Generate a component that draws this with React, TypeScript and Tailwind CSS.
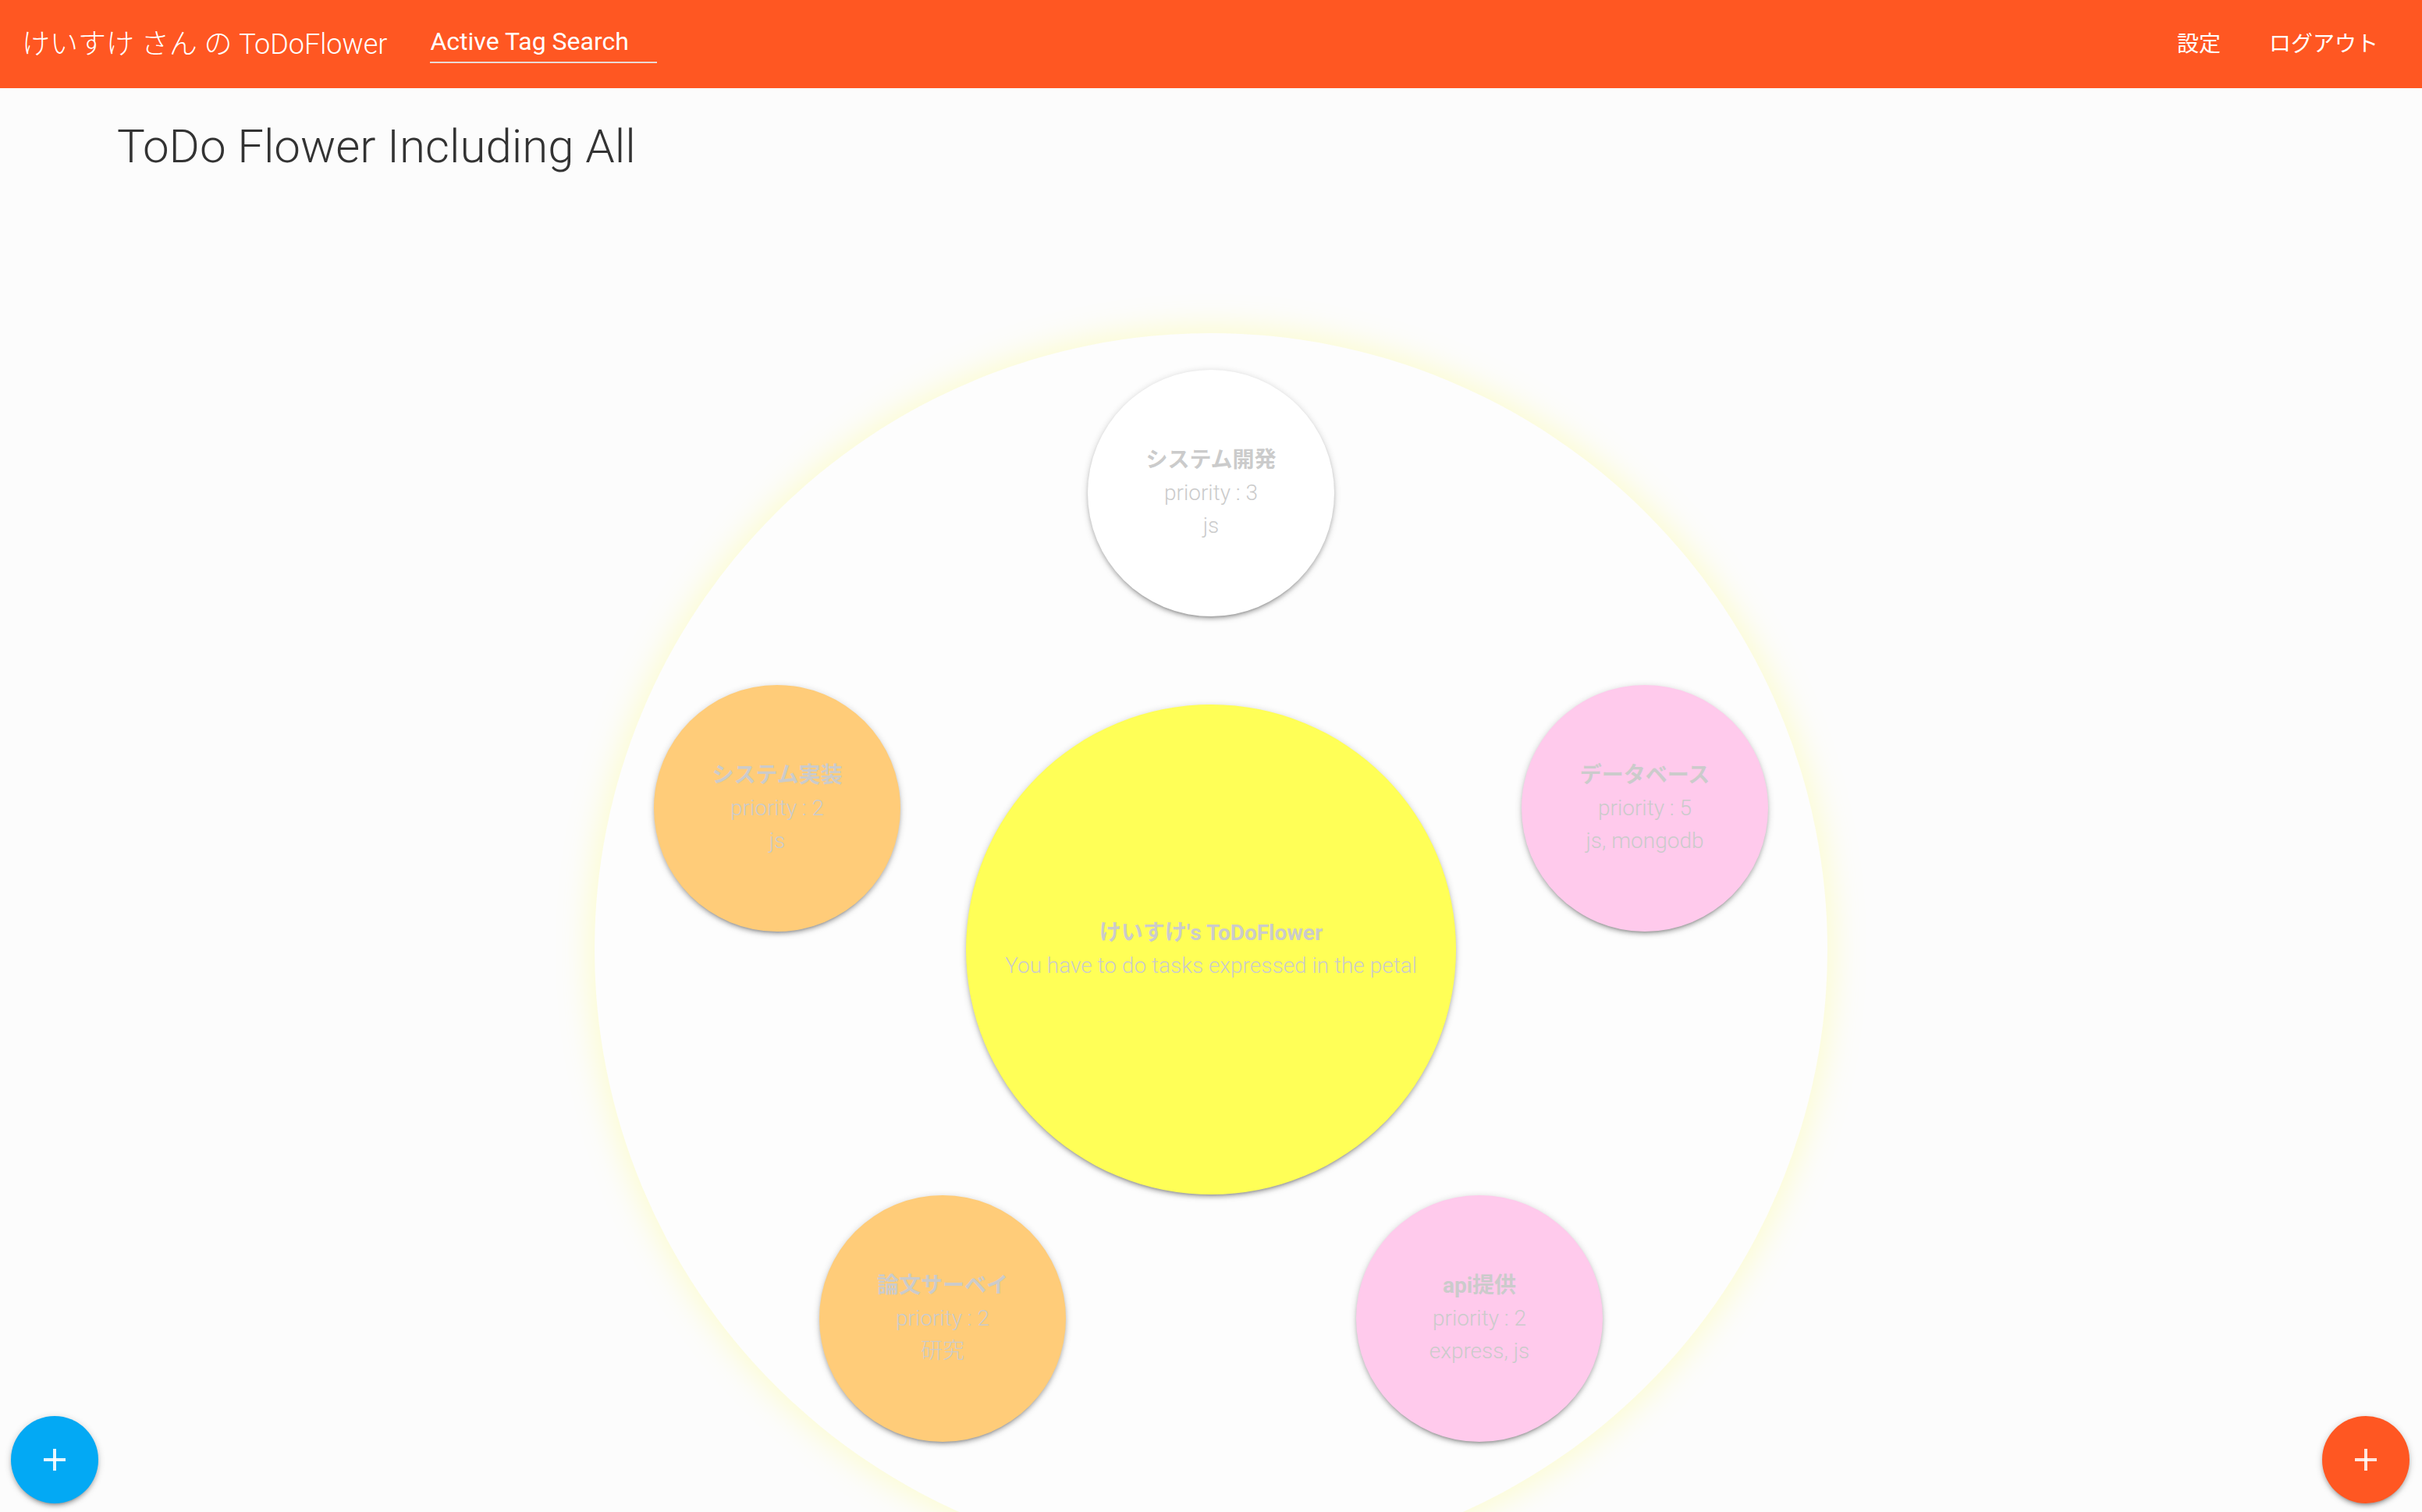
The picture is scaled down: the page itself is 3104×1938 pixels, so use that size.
import React from "react";

const FONT = "font-['Roboto','Noto_Sans_CJK_JP',sans-serif]";

type PetalProps = {
  pos: string;
  bg: string;
  title: string;
  priority: number;
  tags: string;
};

function Petal({ pos, bg, title, priority, tags }: PetalProps) {
  return (
    <div
      className={`absolute ${pos} ${bg} w-[316px] h-[316px] rounded-full flex flex-col items-center justify-center text-[#cbcbcb] text-[28px] leading-[42px] shadow-[0_4px_4px_0_rgba(0,0,0,0.14),0_6px_2px_-4px_rgba(0,0,0,0.12),0_2px_10px_0_rgba(0,0,0,0.2)]`}
    >
      <div className="font-bold">{title}</div>
      <div className="font-light">priority : {priority}</div>
      <div className="font-light">{tags}</div>
    </div>
  );
}

function PlusIcon() {
  return (
    <svg width="28" height="28" viewBox="0 0 28 28">
      <rect x="0" y="12" width="28" height="4" fill="currentColor" />
      <rect x="12" y="0" width="4" height="28" fill="currentColor" />
    </svg>
  );
}

export default function App() {
  return (
    <div className={`relative h-[1938px] w-full overflow-hidden bg-[#fcfcfc] ${FONT}`}>
      <nav className="h-[113px] bg-[#ff5722] flex items-center pl-[28px] pr-[56px] text-white">
        <div className="text-[36px] font-light">けいすけ さん の ToDoFlower</div>
        <div className="ml-[55px] self-start mt-[27px] w-[291px] h-[54px] flex items-center border-b-2 border-[#ead8d2]">
          <span className="text-[32px] font-normal">Active Tag Search</span>
        </div>
        <div className="ml-auto flex items-center gap-[62px] text-[28px]">
          <span>設定</span>
          <span>ログアウト</span>
        </div>
      </nav>

      <h4 className="pl-[150px] mt-[38px] text-[60px] leading-[74px] font-light text-[#333333]">
        ToDo Flower Including All
      </h4>

      <div className="relative mx-auto mt-[192px] w-[1600px] h-[1600px]">
        <div className="absolute left-[10px] top-[10px] w-[1580px] h-[1580px] rounded-full bg-[#fdfdfd] shadow-[0_0_36px_10px_rgba(255,255,140,0.35)]" />

        <div className="absolute left-[486px] top-[486px] w-[628px] h-[628px] rounded-full bg-[#ffff57] flex flex-col items-center justify-center text-[#cbcbcb] text-[28px] leading-[42px] shadow-[0_4px_4px_0_rgba(0,0,0,0.14),0_6px_2px_-4px_rgba(0,0,0,0.12),0_2px_10px_0_rgba(0,0,0,0.2)]">
          <div className="font-bold">けいすけ's ToDoFlower</div>
          <div className="font-light">You have to do tasks expressed in the petal</div>
        </div>

        <Petal pos="left-[642px] top-[57px]" bg="bg-white" title="システム開発" priority={3} tags="js" />
        <Petal pos="left-[1198px] top-[461px]" bg="bg-[#ffcaec]" title="データベース" priority={5} tags="js, mongodb" />
        <Petal pos="left-[986px] top-[1115px]" bg="bg-[#ffcaec]" title="api提供" priority={2} tags="express, js" />
        <Petal pos="left-[298px] top-[1115px]" bg="bg-[#ffcc79]" title="論文サーベイ" priority={2} tags="研究" />
        <Petal pos="left-[86px] top-[461px]" bg="bg-[#ffcc79]" title="システム実装" priority={2} tags="js" />
      </div>

      <button className="absolute left-[14px] top-[1815px] w-[112px] h-[112px] rounded-full bg-[#03a9f4] text-white/90 flex items-center justify-center shadow-[0_4px_4px_0_rgba(0,0,0,0.14),0_6px_2px_-4px_rgba(0,0,0,0.12),0_2px_10px_0_rgba(0,0,0,0.2)]">
        <PlusIcon />
      </button>
      <button className="absolute right-[16px] top-[1815px] w-[112px] h-[112px] rounded-full bg-[#ff5722] text-white/85 flex items-center justify-center shadow-[0_4px_4px_0_rgba(0,0,0,0.14),0_6px_2px_-4px_rgba(0,0,0,0.12),0_2px_10px_0_rgba(0,0,0,0.2)]">
        <PlusIcon />
      </button>
    </div>
  );
}
